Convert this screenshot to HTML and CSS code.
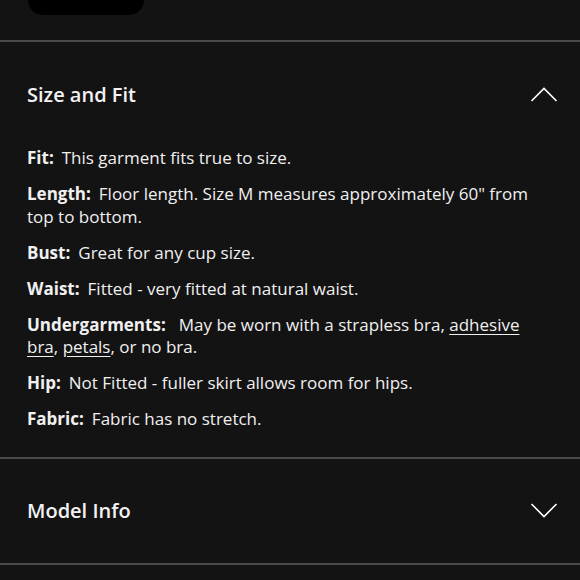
FILE: index.html
```html
<!DOCTYPE html>
<html lang="en">
<head>
<meta charset="utf-8">
<link rel="stylesheet" href="styles.css">
</head>
<body>
<div class="top">
  <div class="pill"></div>
</div>
<section class="acc">
  <div class="acc-head">
    <h2 class="acc-title">Size and Fit</h2>
    <svg class="chev" width="28" height="16" viewBox="0 0 28 16"><polyline points="1.5,15 14,2.5 26.5,15" fill="none" stroke="#fff" stroke-width="1.6"/></svg>
  </div>
  <div class="acc-body">
    <p><b>Fit:</b>This garment fits true to size.</p>
    <p><b>Length:</b>Floor length. Size M measures approximately 60" from top to bottom.</p>
    <p><b>Bust:</b>Great for any cup size.</p>
    <p><b>Waist:</b>Fitted - very fitted at natural waist.</p>
    <p><b class="wide">Undergarments:</b>May be worn with a strapless bra, <a href="#">adhesive bra</a>, <a href="#">petals</a>, or no bra.</p>
    <p><b>Hip:</b>Not Fitted - fuller skirt allows room for hips.</p>
    <p><b>Fabric:</b>Fabric has no stretch.</p>
  </div>
</section>
<section class="acc">
  <div class="acc-head">
    <h2 class="acc-title">Model Info</h2>
    <svg class="chev" width="28" height="16" viewBox="0 0 28 16"><polyline points="1.5,1 14,13.5 26.5,1" fill="none" stroke="#fff" stroke-width="1.6"/></svg>
  </div>
</section>
<div class="bottom"></div>
</body>
</html>
```
FILE: styles.css
```css
html, body {
  margin: 0;
  padding: 0;
  background: #141314;
  color: #f0f0f0;
  font-family: "Open Sans", "Lato", sans-serif;
}
.top {
  height: 40px;
  padding-left: 28px;
}
.pill {
  width: 116px;
  height: 15px;
  background: #000;
  border-radius: 0 0 15px 15px;
}
.acc {
  border-top: 2px solid #4a4a4a;
}
.acc-head {
  height: 104px;
  display: flex;
  align-items: center;
  justify-content: space-between;
  padding: 0 22px 0 27px;
}
.acc-title {
  margin: 0;
  font-size: 20px;
  font-weight: 600;
  color: #f2f2f2;
}
.chev {
  display: block;
}
.acc-body {
  padding: 1px 27px 26px 27px;
}
.acc-body p {
  margin: 0 0 13.5px 0;
  font-size: 17px;
  line-height: 22.5px;
}
.acc-body p:last-child {
  margin-bottom: 0;
}
.acc-body b {
  font-weight: 700;
  margin-right: 8px;
}
.acc-body b.wide {
  margin-right: 13px;
}
.acc-body a {
  color: inherit;
  text-decoration: underline;
  text-underline-offset: 3px;
}
.bottom {
  border-top: 2px solid #4a4a4a;
  height: 20px;
}
```
